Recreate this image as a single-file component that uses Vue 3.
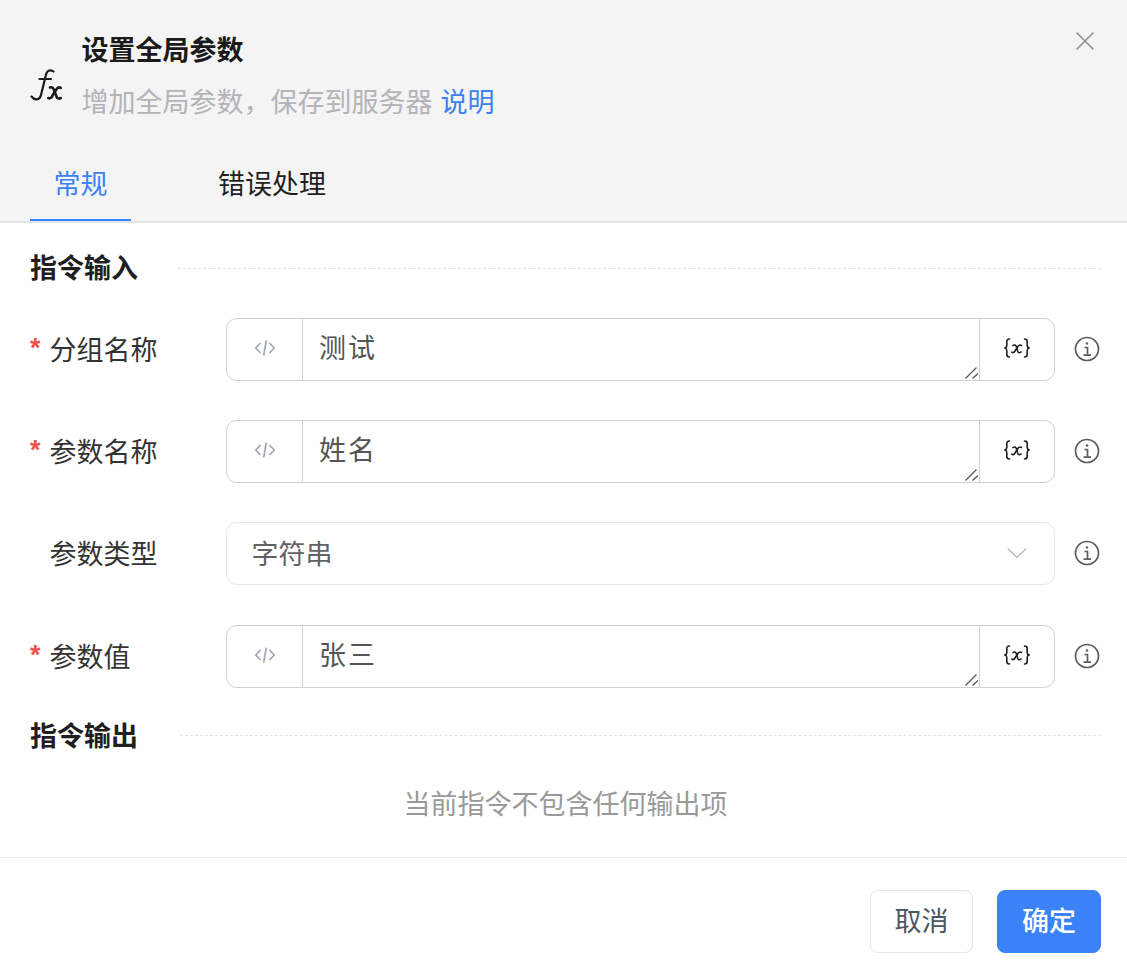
<script setup>
const rows = [
  { label: '分组名称', value: '测试', required: true },
  { label: '参数名称', value: '姓名', required: true },
  { label: '参数类型', value: '字符串', select: true },
  { label: '参数值', value: '张三', required: true }
]
</script>

<template>
  <div class="dialog">
    <header class="head">
      <div class="intro">
        <svg class="fx" viewBox="0 0 32 32" width="32" height="32" fill="none" stroke="#1a1a1a" stroke-width="2.200" stroke-linecap="round" stroke-linejoin="round">
          <path d="M23.500 2.500C21 .3 17.200 1 16 5.500L11 26C10 31 5 32 1.500 27.500" />
          <path d="M9.500 10H21" />
          <path d="M20 18.500C22 17.800 23 18.500 23.800 20.500L26.500 27.500C27.300 29.500 28.800 30 30.800 29" stroke-width="2.600" />
          <path d="M30.800 19C29.300 18 27.800 18.500 26.500 20.300L22.800 26C21.800 28.500 20.300 30 18.300 29" stroke-width="2.600" />
        </svg>
        <div class="texts">
          <div class="title">设置全局参数</div>
          <div class="sub">增加全局参数&#xFF0C;保存到服务器 <span class="link">说明</span></div>
        </div>
      </div>
      <nav class="tabs">
        <div class="tab on">常规</div>
        <div class="tab">错误处理</div>
      </nav>
      <svg class="close" viewBox="0 0 20 20" width="20" height="20" stroke="#8f939c" stroke-width="1.700" stroke-linecap="round">
        <path d="M2 2l16 16M18 2L2 18" />
      </svg>
    </header>

    <main class="body">
      <div class="section first"><span class="sec-title">指令输入</span><i class="dash"></i></div>
      <div v-for="r in rows" :key="r.label" class="row">
        <label class="label"><span class="star">{{ r.required ? '*' : '' }}</span>{{ r.label }}</label>
        <div v-if="r.select" class="select">
          <span class="sel-text">{{ r.value }}</span>
          <svg viewBox="0 0 24 14" width="22" height="14" fill="none" stroke="#b8bcc4" stroke-width="1.600">
            <path d="M2 2l10 10L22 2" />
          </svg>
        </div>
        <div v-else class="group">
          <div class="side left">
            <svg viewBox="0 0 22 18" width="22" height="18" fill="none" stroke="#a0a6b2" stroke-width="1.700">
              <path d="M6.500 4L1.800 9l4.700 5M15.500 4l4.700 5-4.700 5M12.300 1.500L9.700 16.500" />
            </svg>
          </div>
          <div class="area-wrap">
            <textarea class="area" :value="r.value" rows="1" spellcheck="false"></textarea>
            <svg class="grip" viewBox="0 0 14 14" width="14" height="14" fill="none" stroke="#555" stroke-width="1.300">
              <path d="M.5 12.500L11.500 1.500M7.500 12.500L13 7.500" />
            </svg>
          </div>
          <div class="side right">
            <svg viewBox="0 0 26 20" width="26" height="20" fill="none" stroke="#1f1f1f" stroke-width="1.600" stroke-linecap="round">
              <path d="M5.500 1C3.500 1 2.800 2 2.800 3.500V7.500C2.800 9 2 9.700 1 10C2 10.300 2.800 11 2.800 12.500V16.500C2.800 18 3.500 19 5.500 19" />
              <path d="M20.500 1C22.500 1 23.200 2 23.200 3.500V7.500C23.200 9 24 9.700 25 10C24 10.300 23.200 11 23.200 12.500V16.500C23.200 18 22.500 19 20.500 19" />
              <path d="M9 7.500C10.500 6.500 11.700 6.800 12.300 8.500L13.800 13.500C14.300 15 15.500 15 17 14" />
              <path d="M17.500 7.500C16 6.500 15 7 14 8.300L11 13C10 14.800 9 15 7.800 14.200" />
            </svg>
          </div>
        </div>
        <svg class="info" viewBox="0 0 26 26" width="26" height="26" fill="none" stroke="#5a5d62" stroke-width="1.700">
          <circle cx="13" cy="13" r="11.500" />
          <path d="M10.500 11.500h3V19M9.500 19.200h7.500" />
          <circle cx="13" cy="7.500" r="1.200" fill="#5a5d62" stroke="none" />
        </svg>
      </div>
      <div class="section second"><span class="sec-title">指令输出</span><i class="dash"></i></div>
      <div class="empty">当前指令不包含任何输出项</div>
    </main>

    <footer class="foot">
      <button class="btn">取消</button>
      <button class="btn primary">确定</button>
    </footer>
  </div>
</template>

<style scoped>
.dialog {
  width: 1127px;
  height: 980px;
  background: #fff;
  font-family: "Noto Sans CJK SC", "Noto Sans", sans-serif;
  font-size: 27px;
  color: #333;
}
.head {
  position: relative;
  height: 223px;
  box-sizing: border-box;
  background: #f4f4f5;
  border-bottom: 2px solid #e5e5e5;
  padding: 30px 30px 0;
}
.intro {
  display: flex;
  align-items: flex-start;
  height: 92px;
}
.fx { flex: none; margin: 39px 19.500px 0 0; }
.texts { margin-top: -1px; }
.title {
  line-height: 40px;
  font-weight: 700;
  color: #1a1a1a;
}
.sub {
  margin-top: 12px;
  line-height: 40px;
  color: #b3b3b8;
}
.link { color: #3b82f6; margin-left: 2px; }
.tabs {
  display: flex;
  margin-top: 38px;
  gap: 63.500px;
}
.tab {
  height: 61px;
  box-sizing: border-box;
  padding: 3px 23.500px 0;
  line-height: 40px;
  color: #1f1f1f;
}
.tab.on {
  color: #3b82f6;
  border-bottom: 2px solid #3b82f6;
}
.close { position: absolute; top: 31px; right: 32px; }
.body { padding: 0 26px 0 30px; }
.section {
  display: flex;
  align-items: center;
  height: 40px;
}
.section.first { margin-top: 26px; }
.section.second { margin-top: 28px; }
.sec-title {
  align-self: flex-start;
  line-height: 36px;
  font-weight: 700;
  color: #1f1f1f;
  margin-right: 40px;
}
.second .sec-title { margin-right: 42px; line-height: 38px; }
.dash {
  flex: 1;
  margin-top: -2px;
  border-top: 1px dashed #e2e4e8;
}
.row {
  display: flex;
  align-items: center;
  height: 63px;
  margin-top: 39px;
}
.section.first + .row { margin-top: 29px; }
.row:nth-child(5) { margin-top: 40px; }
.label {
  flex: none;
  width: 196px;
  display: flex;
  color: #333;
  margin-bottom: 2px;
}
.star {
  width: 19.500px;
  color: #f05050;
  flex: none;
  font-family: "Liberation Sans", sans-serif;
  font-weight: 700;
  margin: 4px 0 -4px;
}
.group, .select {
  flex: none;
  width: 829px;
  height: 63px;
  box-sizing: border-box;
  border-radius: 10.670px;
  display: flex;
  overflow: hidden;
}
.group { border: 1px solid #cfd0d3; }
.select {
  border: 1px solid #e5e7eb;
  align-items: center;
  justify-content: space-between;
  padding: 0 26px 0 24.500px;
  color: #606266;
}
.select svg { margin-bottom: 1px; }
.sel-text { margin-bottom: 3px; }
.side {
  flex: none;
  box-sizing: border-box;
  display: flex;
  align-items: center;
  justify-content: center;
  padding-bottom: 3px;
}
.left { width: 76px; border-right: 1px solid #cfd0d3; }
.right { width: 75px; border-left: 1px solid #cfd0d3; }
.area-wrap {
  flex: 1;
  min-width: 0;
  position: relative;
}
.area {
  width: 100%;
  height: 61px;
  box-sizing: border-box;
  border: 0;
  outline: 0;
  margin: 0;
  padding: 8px 16px;
  font: inherit;
  line-height: 40px;
  letter-spacing: 2px;
  color: #555;
  background: #fff;
  resize: none;
  display: block;
}
.grip { position: absolute; right: 0; bottom: 0; }
.info { margin: 0 0 2px 19px; flex: none; }
.empty {
  margin-top: 27px;
  text-align: center;
  line-height: 40px;
  color: #999;
}
.foot {
  margin-top: 34px;
  border-top: 1px solid #e5e5e5;
  padding: 32px 26px 0 0;
  display: flex;
  justify-content: flex-end;
  gap: 24px;
}
.btn {
  width: 103px;
  height: 63px;
  border: 1px solid #e5e7eb;
  border-radius: 8px;
  background: #fff;
  font: inherit;
  color: #4b5563;
  padding: 0 0 5px;
}
.btn.primary {
  width: 104px;
  background: #3b82f6;
  border-color: #3b82f6;
  color: #fff;
  font-weight: 500;
}
</style>
